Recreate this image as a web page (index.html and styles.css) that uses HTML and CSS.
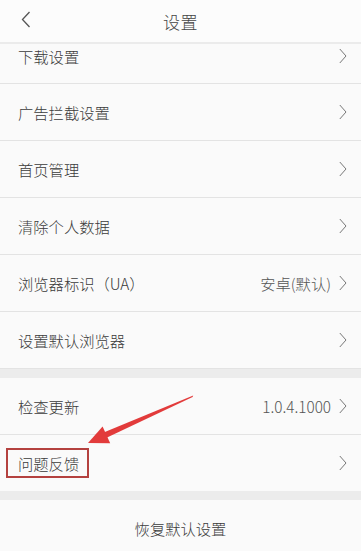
FILE: index.html
```html
<!DOCTYPE html>
<html lang="zh">
<head>
<meta charset="utf-8">
<link rel="stylesheet" href="styles.css">
</head>
<body>
<div class="page">
  <header class="topbar">
    <svg class="back" width="10" height="17" viewBox="0 0 10 17"><path d="M8.5 1 L1.5 8.5 L8.5 16" fill="none" stroke="#555" stroke-width="1.3"/></svg>
    <div class="title">设置</div>
  </header>
  <div class="group">
    <div class="row first"><span class="label">下载设置</span><span class="chev"></span></div>
    <div class="row"><span class="label">广告拦截设置</span><span class="chev"></span></div>
    <div class="row"><span class="label">首页管理</span><span class="chev"></span></div>
    <div class="row"><span class="label">清除个人数据</span><span class="chev"></span></div>
    <div class="row"><span class="label">浏览器标识（UA）</span><span class="value">安卓(默认)</span><span class="chev"></span></div>
    <div class="row"><span class="label">设置默认浏览器</span><span class="chev"></span></div>
  </div>
  <div class="gap"></div>
  <div class="group">
    <div class="row"><span class="label">检查更新</span><span class="value">1.0.4.1000</span><span class="chev"></span></div>
    <div class="row last"><span class="label">问题反馈</span><span class="chev"></span><span class="highlight"></span></div>
  </div>
  <div class="gap"></div>
  <div class="reset">恢复默认设置</div>
  <svg class="pointer" width="361" height="551" viewBox="0 0 361 551">
    <polygon fill="#e23b3b" points="193.2,395.6 192.6,397 106,438 103.6,432.6"/>
    <polygon fill="#e23b3b" points="88,443 102.6,426.6 110.2,443.2"/>
  </svg>
</div>
</body>
</html>
```
FILE: styles.css
```css
html, body {
  margin: 0;
  padding: 0;
}
body {
  background: #fafafa;
  font-family: "Noto Sans CJK SC", "Noto Sans", sans-serif;
  font-weight: 300;
  color: #333;
}
.page {
  position: relative;
  width: 361px;
  height: 551px;
  overflow: hidden;
  background: #fafafa;
}
.topbar {
  height: 42px;
  display: flex;
  align-items: center;
  justify-content: center;
  position: relative;
  background: #fcfcfc;
  border-bottom: 2px solid #ebebeb;
}
.back {
  position: absolute;
  left: 21px;
  top: 11px;
}
.title {
  font-size: 17px;
  color: #444;
  letter-spacing: 0.5px;
}
.group {
  display: flex;
  flex-direction: column;
}
.row {
  position: relative;
  height: 56px;
  display: flex;
  align-items: center;
  padding: 0 14px 0 18px;
  border-bottom: 1px solid #e3e3e3;
  background: #fafafa;
  font-size: 15.3px;
}
.row.first {
  height: 40px;
  align-items: flex-start;
  padding-top: 1px;
  box-sizing: border-box;
}
.row.first .chev {
  margin-top: 3px;
}
.row.last {
  border-bottom: none;
}
.label {
  flex: 1;
  color: #3a3a3a;
  line-height: 22px;
}
.value {
  color: #555;
  margin-right: 8px;
}
.chev {
  width: 8px;
  height: 16px;
  background: no-repeat center / 8px 16px url("data:image/svg+xml;utf8,<svg xmlns='http://www.w3.org/2000/svg' width='8' height='16' viewBox='0 0 8 16'><path d='M0.8 1 L7 8 L0.8 15' fill='none' stroke='%23777' stroke-width='1'/></svg>");
}
.gap {
  height: 9px;
  background: #ececec;
}
.reset {
  height: 51px;
  display: flex;
  align-items: center;
  justify-content: center;
  font-size: 15.3px;
  color: #3a3a3a;
  padding-top: 4px;
  box-sizing: border-box;
}
.highlight {
  position: absolute;
  left: 6px;
  top: 13px;
  width: 79px;
  height: 26px;
  border: 2.5px solid #b4413f;
}
.pointer {
  position: absolute;
  left: 0;
  top: 0;
  pointer-events: none;
}
```
